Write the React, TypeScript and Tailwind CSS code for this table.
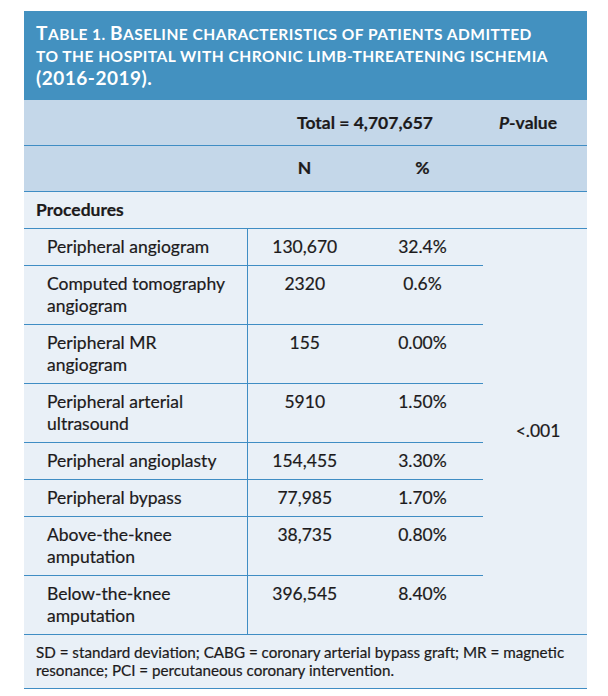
const rows: { label: string; n: string; pct: string }[] = [
  { label: 'Peripheral angiogram', n: '130,670', pct: '32.4%' },
  { label: 'Computed tomography angiogram', n: '2320', pct: '0.6%' },
  { label: 'Peripheral MR angiogram', n: '155', pct: '0.00%' },
  { label: 'Peripheral arterial ultrasound', n: '5910', pct: '1.50%' },
  { label: 'Peripheral angioplasty', n: '154,455', pct: '3.30%' },
  { label: 'Peripheral bypass', n: '77,985', pct: '1.70%' },
  { label: 'Above-the-knee amputation', n: '38,735', pct: '0.80%' },
  { label: 'Below-the-knee amputation', n: '396,545', pct: '8.40%' },
];

const line = 'border-[#3f8dc4]';

export default function App() {
  return (
    <div className="min-h-[696px] bg-white pl-[24px] pt-[11px] font-['Lato','Liberation_Sans',sans-serif] text-[#1c1a1b] [-webkit-text-stroke:0.2px]">
      <div className={`w-[563px] border-b ${line} bg-[#e9f0f7]`}>
        {/* title bar, small caps drawn by hand */}
        <div className="h-[89px] whitespace-nowrap bg-[#4391c0] px-[12px] pt-[11px] text-[15.5px] font-bold uppercase leading-[21.5px] tracking-[0.5px] text-white [-webkit-text-stroke:0px]">
          <span className="text-[19px]">T</span>able 1. <span className="text-[19px]">B</span>aseline characteristics of
          patients admitted
          <br />
          to the hospital with chronic limb-threatening ischemia
          <br />
          <span className="text-[19px]">(2016-2019).</span>
        </div>
        <table className="w-full border-collapse text-[17.5px] leading-[22px]">
          <colgroup>
            <col className="w-[223px]" />
            <col className="w-[115px]" />
            <col className="w-[121px]" />
            <col className="w-[104px]" />
          </colgroup>
          <thead className="bg-[#c4d7e9]">
            <tr className={`h-[45px] border-b ${line}`}>
              <th />
              <th colSpan={2} className="pt-[2px] text-center font-bold">
                Total = 4,707,657
              </th>
              <th className="pr-[14px] pt-[2px] text-center font-bold">
                <span className="italic">P</span>-value
              </th>
            </tr>
            <tr className={`h-[46px] border-b ${line}`}>
              <th />
              <th className="text-center font-bold">N</th>
              <th className="text-center font-bold">%</th>
              <th />
            </tr>
          </thead>
          <tbody>
            <tr className={`h-[37px] border-b ${line}`}>
              <td colSpan={4} className="pl-[12px] font-bold">
                Procedures
              </td>
            </tr>
            {rows.map((row, i) => {
              const last = i === rows.length - 1;
              return (
                <tr key={row.label}>
                  <td className={`border-r ${line} py-[7px] pl-[23px] pr-[16px] align-top ${last ? '' : 'border-b'}`}>
                    {row.label}
                  </td>
                  <td className={`py-[7px] text-center align-top ${last ? '' : `border-b ${line}`}`}>{row.n}</td>
                  <td className={`py-[7px] text-center align-top ${last ? '' : `border-b ${line}`}`}>{row.pct}</td>
                  {i === 0 ? (
                    <td rowSpan={rows.length} className="pl-[6px] text-center align-middle">
                      &lt;.001
                    </td>
                  ) : null}
                </tr>
              );
            })}
          </tbody>
        </table>
        <div className={`border-t ${line} whitespace-nowrap px-[12px] pb-[9px] pt-[8px] text-[15.2px] leading-[18px]`}>
          SD = standard deviation; CABG = coronary arterial bypass graft; MR = magnetic
          <br />
          resonance; PCI = percutaneous coronary intervention.
        </div>
      </div>
    </div>
  );
}
